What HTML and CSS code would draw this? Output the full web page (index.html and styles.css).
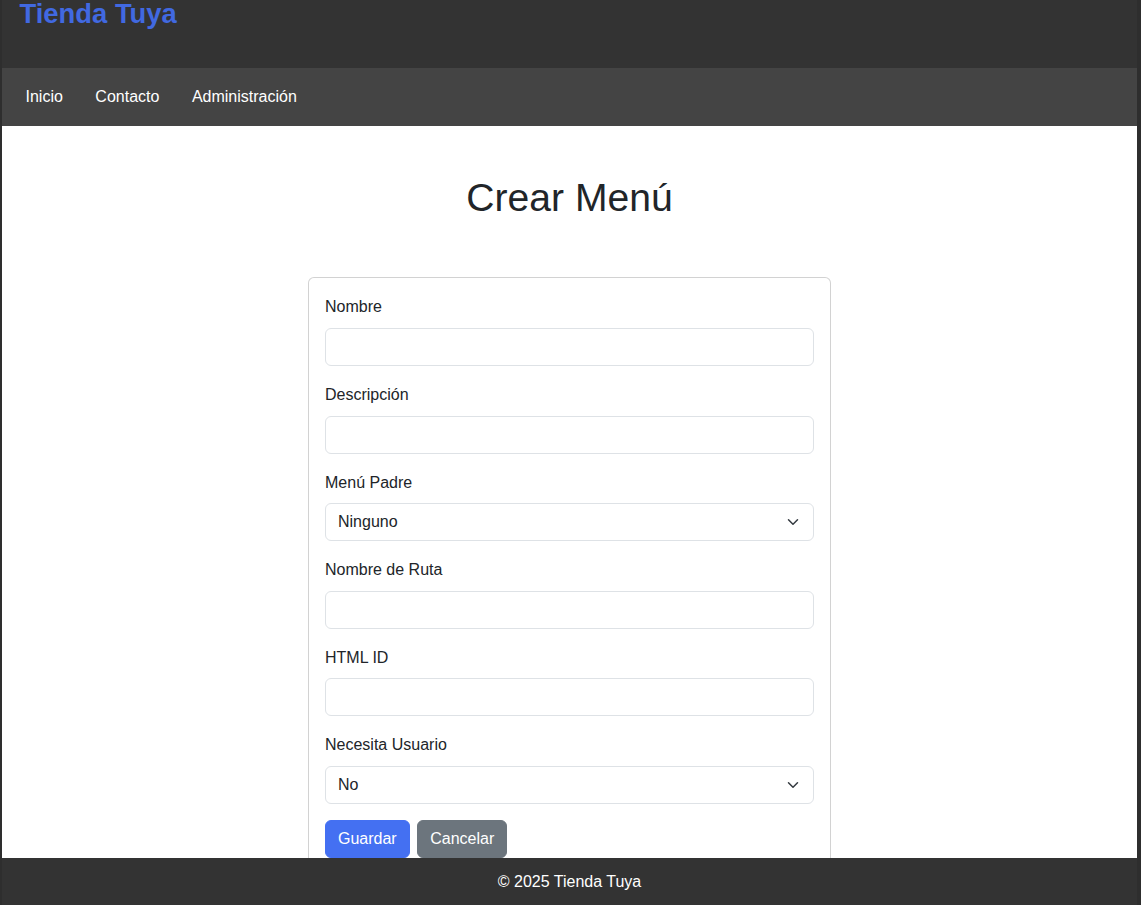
FILE: index.html
```html
<!DOCTYPE html>
<html lang="es">
<head>
<meta charset="utf-8">
<title>Crear Menú - Tienda Tuya</title>
<link rel="stylesheet" href="styles.css">
</head>
<body>
<div class="page">
  <header class="site-header">
    <h1 class="brand">Tienda Tuya</h1>
  </header>
  <nav class="site-nav">
    <a href="#" class="nav-link">Inicio</a>
    <a href="#" class="nav-link">Contacto</a>
    <a href="#" class="nav-link">Administración</a>
  </nav>
  <main class="main">
    <h2 class="page-title">Crear Menú</h2>
    <form class="card">
      <div class="field">
        <label class="field-label" for="nombre">Nombre</label>
        <input class="control" id="nombre" type="text">
      </div>
      <div class="field">
        <label class="field-label" for="descripcion">Descripción</label>
        <input class="control" id="descripcion" type="text">
      </div>
      <div class="field">
        <label class="field-label" for="padre">Menú Padre</label>
        <div class="select-wrap">
          <select class="control select" id="padre">
            <option>Ninguno</option>
          </select>
          <svg class="chevron" viewBox="0 0 16 16" width="16" height="12" aria-hidden="true"><path d="M2 5l6 6 6-6" fill="none" stroke="#343a40" stroke-width="2" stroke-linecap="round" stroke-linejoin="round"/></svg>
        </div>
      </div>
      <div class="field">
        <label class="field-label" for="ruta">Nombre de Ruta</label>
        <input class="control" id="ruta" type="text">
      </div>
      <div class="field">
        <label class="field-label" for="htmlid">HTML ID</label>
        <input class="control" id="htmlid" type="text">
      </div>
      <div class="field">
        <label class="field-label" for="usuario">Necesita Usuario</label>
        <div class="select-wrap">
          <select class="control select" id="usuario">
            <option>No</option>
            <option>Sí</option>
          </select>
          <svg class="chevron" viewBox="0 0 16 16" width="16" height="12" aria-hidden="true"><path d="M2 5l6 6 6-6" fill="none" stroke="#343a40" stroke-width="2" stroke-linecap="round" stroke-linejoin="round"/></svg>
        </div>
      </div>
      <div class="actions">
        <button type="submit" class="btn btn-primary">Guardar</button>
        <a href="#" class="btn btn-secondary">Cancelar</a>
      </div>
    </form>
  </main>
  <footer class="site-footer">© 2025 Tienda Tuya</footer>
</div>
</body>
</html>
```

FILE: styles.css
```css
html, body {
  margin: 0;
  padding: 0;
  height: 100%;
  overflow: hidden;
}
body {
  background: #2e2e2e;
  font-family: "Liberation Sans", Arial, sans-serif;
  font-size: 16px;
  line-height: 1.5;
  color: #212529;
}
.page {
  margin: 0 4px 0 2px;
  min-height: 100%;
  background: #fff;
}
.site-header {
  background: #333;
  height: 68px;
  padding-left: 17.5px;
}
.brand {
  margin: 0;
  font-size: 27.4px;
  line-height: 28px;
  font-weight: bold;
  color: #4169e1;
}
.site-nav {
  background: #444;
  height: 58px;
  display: flex;
  align-items: center;
  gap: 32.5px;
  padding-left: 23.5px;
}
.nav-link {
  color: #fff;
  text-decoration: none;
  font-size: 16px;
  line-height: 24px;
}
.main {
  padding-bottom: 80px;
}
.page-title {
  margin: 49px 0 55px;
  text-align: center;
  font-size: 39.1px;
  line-height: 1.2;
  font-weight: 500;
  color: #212529;
}
.card {
  width: 523px;
  box-sizing: border-box;
  margin: 0 auto;
  border: 1px solid rgba(0, 0, 0, 0.175);
  border-radius: 6px;
  padding: 16.5px 16px 16px;
  background: #fff;
}
.field {
  margin-bottom: 16px;
}
.field-label {
  display: block;
  line-height: 24px;
  padding-top: 1px;
  margin-bottom: 8.6px;
}
.control {
  display: block;
  width: 100%;
  box-sizing: border-box;
  height: 38px;
  padding: 6px 12px;
  font-family: inherit;
  font-size: 16px;
  line-height: 24px;
  color: #212529;
  background: #fff;
  border: 1px solid #dee2e6;
  border-radius: 6px;
  outline: none;
}
.select-wrap {
  position: relative;
}
.select {
  appearance: none;
  -webkit-appearance: none;
  padding-right: 36px;
}
.chevron {
  position: absolute;
  right: 13px;
  top: 13px;
  pointer-events: none;
}
.actions {
  display: flex;
  gap: 7.5px;
}
.btn {
  display: inline-block;
  box-sizing: border-box;
  height: 38px;
  padding: 6px 12px;
  border: 1px solid transparent;
  border-radius: 6px;
  font-family: inherit;
  font-size: 16px;
  line-height: 24px;
  color: #fff;
  text-decoration: none;
  cursor: pointer;
}
.btn-primary {
  background: #4470f2;
  border-color: #4470f2;
}
.btn-secondary {
  background: #6c757d;
  border-color: #6c757d;
}
.site-footer {
  position: fixed;
  left: 2px;
  right: 4px;
  bottom: 0;
  height: 47px;
  line-height: 47px;
  background: #333;
  color: #fff;
  text-align: center;
  font-size: 16px;
}
```
